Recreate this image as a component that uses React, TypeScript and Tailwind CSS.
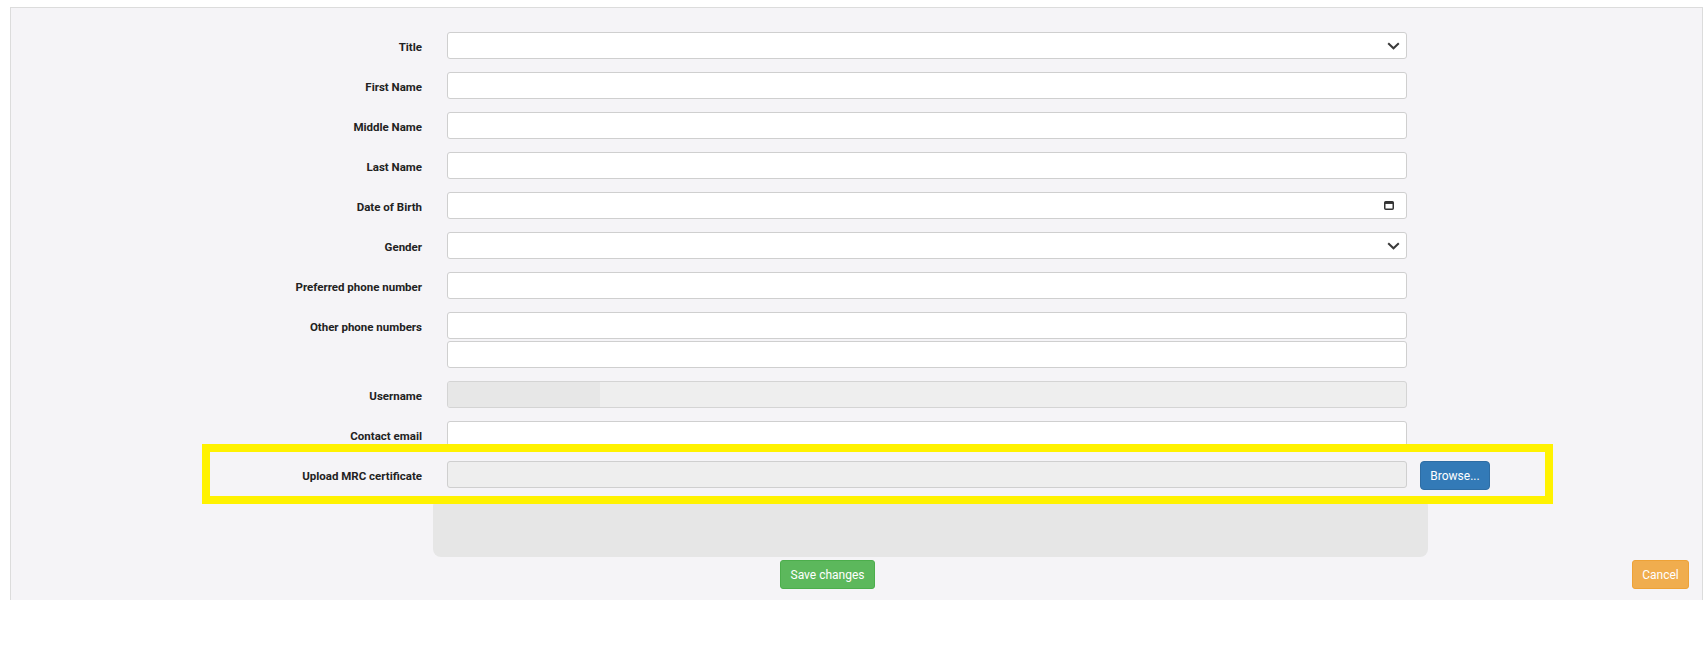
import React from "react";

const labelCls =
  "h-[27px] w-[411px] shrink-0 text-right text-[11.5px] font-bold leading-[30px] text-[#222]";
const inputCls =
  "block h-[27px] w-[960px] rounded-[3px] border border-[#cfcfcf] bg-white px-2 text-[12px] outline-none";

function Chevron() {
  return (
    <svg
      className="pointer-events-none absolute right-[7px] top-[10px]"
      width="13"
      height="8"
      viewBox="0 0 13 8"
      fill="none"
    >
      <path d="M1.2 1.2 6.5 6.3 11.8 1.2" stroke="#3a3a3a" strokeWidth="2" />
    </svg>
  );
}

function CalendarIcon() {
  return (
    <svg
      className="pointer-events-none absolute right-[13px] top-[9px]"
      width="10"
      height="9"
      viewBox="0 0 10 9"
      fill="none"
    >
      <rect x="0.75" y="0.75" width="8.5" height="7.5" rx="1" stroke="#333" strokeWidth="1.5" />
      <rect x="0.75" y="0.75" width="8.5" height="2.2" fill="#333" />
    </svg>
  );
}

function Row({ label, children }: { label: string; children: React.ReactNode }) {
  return (
    <div className="flex items-start">
      <label className={labelCls}>{label}</label>
      <div className="ml-[25px] flex items-start">{children}</div>
    </div>
  );
}

export default function App() {
  return (
    <div className="relative min-h-[648px] bg-white" style={{ fontFamily: "Roboto, 'Liberation Sans', sans-serif" }}>
      <div className="ml-[10px] pt-[7px]">
        <div className="flex h-[593px] w-[1693px] flex-col border border-b-0 border-[#dcdcdc] bg-[#f5f4f7] pt-[24px]">
          <div className="flex flex-col gap-[13px]">
            <Row label="Title">
              <div className="relative">
                <select className={`${inputCls} appearance-none`} defaultValue="">
                  <option value=""></option>
                </select>
                <Chevron />
              </div>
            </Row>
            <Row label="First Name">
              <input className={inputCls} />
            </Row>
            <Row label="Middle Name">
              <input className={inputCls} />
            </Row>
            <Row label="Last Name">
              <input className={inputCls} />
            </Row>
            <Row label="Date of Birth">
              <div className="relative">
                <input className={inputCls} />
                <CalendarIcon />
              </div>
            </Row>
            <Row label="Gender">
              <div className="relative">
                <select className={`${inputCls} appearance-none`} defaultValue="">
                  <option value=""></option>
                </select>
                <Chevron />
              </div>
            </Row>
            <Row label="Preferred phone number">
              <input className={inputCls} />
            </Row>
            <Row label="Other phone numbers">
              <div className="flex flex-col gap-[2px]">
                <input className={inputCls} />
                <input className={inputCls} />
              </div>
            </Row>
            <Row label="Username">
              <div className="flex h-[27px] w-[960px] overflow-hidden rounded-[3px] border border-[#d4d4d4] bg-[#eeeeee]">
                <div className="h-full w-[152px] bg-[#e7e7e7]" />
              </div>
            </Row>
            <Row label="Contact email">
              <input className={inputCls} />
            </Row>
            <Row label="Upload MRC certificate">
              <div className="h-[27px] w-[960px] rounded-[3px] border border-[#cfcfcf] bg-[#eeeeee]" />
              <button className="ml-[13px] h-[29px] w-[70px] rounded-[4px] border border-[#2e6da4] bg-[#337ab7] text-[12px] text-white">
                Browse...
              </button>
            </Row>
          </div>

          <div className="ml-[422px] mt-[8px] h-[59px] w-[995px] rounded-[8px] bg-[#e6e6e6]" />

          <div className="mt-[3px] flex items-start">
            <button className="ml-[769px] h-[29px] w-[95px] rounded-[3px] border border-[#4cae4c] bg-[#5cb85c] text-[12px] text-white">
              Save changes
            </button>
            <button className="ml-auto mr-[13px] h-[29px] w-[57px] rounded-[3px] border border-[#eea236] bg-[#f0ad4e] text-[12px] text-white">
              Cancel
            </button>
          </div>
        </div>
      </div>

      {/* highlight overlay */}
      <div className="pointer-events-none absolute left-[202px] top-[444px] h-[60px] w-[1351px] border-[8px] border-[#fff200]" />
    </div>
  );
}
